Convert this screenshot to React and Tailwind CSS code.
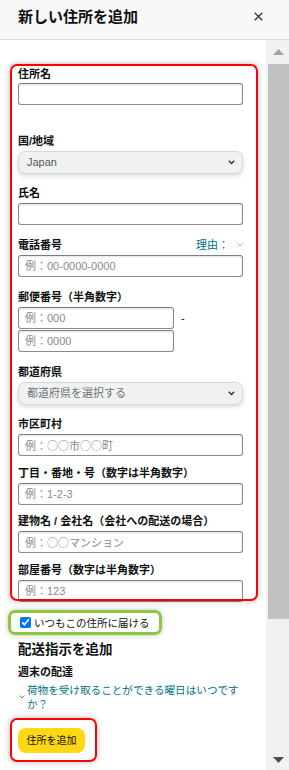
import React from "react";

const FONT = "font-[family-name:'Liberation_Sans','Noto_Sans_CJK_JP',sans-serif]";

function Label({ children, className = "" }) {
  return (
    <div className={"h-[16px] leading-[16px] text-[11px] font-bold text-[#0f1111] whitespace-nowrap " + className}>
      {children}
    </div>
  );
}

function Input({ placeholder = "", className = "w-full" }) {
  return (
    <div
      className={
        "h-[22px] border border-[#888c8c] border-t-[#7a7e7e] rounded-[3px] bg-white shadow-[inset_0_1px_2px_rgba(15,17,17,0.12)] flex items-center pl-[6px] text-[11px] text-[#8a8a8a] whitespace-nowrap " +
        className
      }
    >
      {placeholder}
    </div>
  );
}

function Select({ value, textClass = "text-[#565959]" }) {
  return (
    <div className="h-[23px] w-full rounded-[7px] border border-[#d5d9d9] bg-[#f0f2f2] shadow-[0_2px_4px_rgba(15,17,17,0.15)] flex items-center justify-between pl-[8px] pr-[7px]">
      <span className={"text-[11px] " + textClass}>{value}</span>
      <svg width="7" height="5" viewBox="0 0 7 5" className="shrink-0">
        <path d="M0.8 0.8 L3.5 3.6 L6.2 0.8" fill="none" stroke="#333" strokeWidth="1.4" />
      </svg>
    </div>
  );
}

function Tri({ up, color }) {
  return (
    <svg width="11" height="6" viewBox="0 0 11 6">
      <polygon points={up ? "0,6 5.5,0 11,6" : "0,0 11,0 5.5,6"} fill={color} />
    </svg>
  );
}

const cjk = "font-[family-name:'Noto_Sans_CJK_JP',sans-serif]";

export default function App() {
  return (
    <div className={"w-[289px] h-[770px] bg-white overflow-hidden flex flex-col " + FONT}>
      <header className="h-[40px] shrink-0 bg-[#f8f8f8] border-b border-[#dcdcdc] flex items-start justify-between pl-[18px] pr-[26px] pt-[8px]">
        <h1 className="text-[15px] leading-[18px] font-bold text-[#0f1111]">新しい住所を追加</h1>
        <svg width="9" height="9" viewBox="0 0 9 9" className="mt-[4px]">
          <path d="M0.7 0.7 L8.3 8.3 M8.3 0.7 L0.7 8.3" stroke="#333" strokeWidth="1.3" />
        </svg>
      </header>

      <div className="flex flex-1 min-h-0">
        <div className="flex-1 pt-[24px]">
          {/* red annotated form */}
          <div className="relative ml-[10px] w-[248px] h-[537px] pt-[2px] pl-[8px] pr-[15px]">
            <Label>住所名</Label>
            <Input className="w-full mt-[1px]" />

            <Label className="mt-[28px]">国/地域</Label>
            <div className="mt-[2px]">
              <Select value="Japan" />
            </div>

            <Label className="mt-[11px]">氏名</Label>
            <Input className="w-full mt-[2px]" />

            <div className="mt-[12px] h-[16px] flex items-center justify-between">
              <span className="text-[11px] font-bold text-[#0f1111] leading-[16px]">電話番号</span>
              <span className="flex items-center gap-[8px] text-[11px] text-[#007185] leading-[16px]">
                理由：
                <svg width="6" height="4" viewBox="0 0 6 4">
                  <path d="M0.6 0.6 L3 3 L5.4 0.6" fill="none" stroke="#aaa" strokeWidth="1" />
                </svg>
              </span>
            </div>
            <Input className="w-full mt-[2px]" placeholder="例：00-0000-0000" />

            <Label className="mt-[12px]">郵便番号（半角数字）</Label>
            <div className="mt-[2px] flex items-center">
              <Input className="w-[156px]" placeholder="例：000" />
              <span className="ml-[7px] text-[11px] text-[#0f1111]">-</span>
            </div>
            <Input className="w-[156px] mt-[1px]" placeholder="例：0000" />

            <Label className="mt-[12px]">都道府県</Label>
            <div className="mt-[2px]">
              <Select value="都道府県を選択する" textClass="text-[#6f7373]" />
            </div>

            <Label className="mt-[11px]">市区町村</Label>
            <Input
              className="w-full mt-[2px]"
              placeholder={<span className={cjk}>例：○○市○○町</span>}
            />

            <Label className="mt-[9px]">丁目・番地・号（数字は半角数字）</Label>
            <Input className="w-full mt-[2px]" placeholder="例：1-2-3" />

            <Label className="mt-[8px]">建物名 / 会社名（会社への配送の場合）</Label>
            <Input
              className="w-full mt-[2px]"
              placeholder={<span className={cjk}>例：○○マンション</span>}
            />

            <Label className="mt-[9px]">部屋番号（数字は半角数字）</Label>
            <Input className="w-full mt-[2px]" placeholder="例：123" />

            <div className="absolute inset-0 border-2 border-[#ff0000] rounded-[7px] shadow-[0_0_6px_rgba(0,0,0,0.28)] pointer-events-none" />
          </div>

          {/* green annotated checkbox */}
          <div className="mt-[9px] ml-[8px] w-[154px] h-[25px] border-[3px] border-[#8dc63f] rounded-[7px] shadow-[0_0_5px_rgba(0,0,0,0.25)] flex items-center pl-[9px]">
            <input type="checkbox" checked readOnly className="w-[11px] h-[11px] m-0 accent-[#0075ff]" />
            <span className="ml-[3px] text-[10.5px] leading-[14px] text-[#0f1111] whitespace-nowrap">いつもこの住所に届ける</span>
          </div>

          <div className="pl-[18px]">
            <div className="mt-[6px] text-[13.5px] leading-[18px] font-bold text-[#0f1111]">配送指示を追加</div>
            <div className="mt-[5px] text-[11px] leading-[16px] font-bold text-[#0f1111]">週末の配達</div>
            <div className="mt-[3px] flex items-center">
              <svg width="6" height="4" viewBox="0 0 6 4" className="ml-[1px] mr-[2px]">
                <path d="M0.6 0.6 L3 3 L5.4 0.6" fill="none" stroke="#777" strokeWidth="1" />
              </svg>
              <div className="w-[216px] text-[10.6px] leading-[14px] text-[#007185]">
                荷物を受け取ることができる曜日はいつですか？
              </div>
            </div>
          </div>

          {/* red annotated button */}
          <div className="mt-[7px] ml-[10px] w-[87px] h-[44px] border-2 border-[#ff0000] rounded-[7px] shadow-[0_0_6px_rgba(0,0,0,0.28)] pl-[6px] pt-[8px]">
            <div className="w-[67px] h-[25px] rounded-[8px] bg-[#ffd814] flex items-center justify-center text-[10px] text-[#0f1111]">
              住所を追加
            </div>
          </div>
        </div>

        {/* scrollbar */}
        <div className="w-[23px] shrink-0 bg-[#f1f1f1] flex flex-col">
          <div className="h-[24px] flex items-center justify-center pl-[1px]">
            <Tri up color="#a3a3a3" />
          </div>
          <div className="ml-[2px] h-[555px] bg-[#c1c1c1]" />
          <div className="flex-1" />
          <div className="h-[20px] flex items-center justify-center pl-[1px]">
            <Tri color="#505050" />
          </div>
        </div>
      </div>
    </div>
  );
}
